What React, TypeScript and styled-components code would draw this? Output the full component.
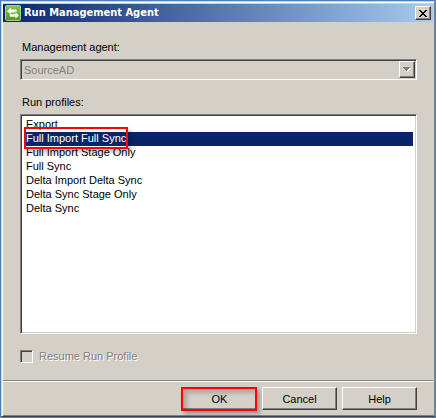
import React, { useState } from "react";
import styled, { createGlobalStyle, css } from "styled-components";

const face = "#d4d0c8";
const shade = "#808080";
const dark = "#404040";
const red = "#ff0000";

const GlobalStyle = createGlobalStyle`
  *, *::before, *::after { box-sizing: border-box; }
  body {
    margin: 0;
    background: #4f81bd;
    font-family: "Liberation Sans", Arial, sans-serif;
    font-size: 11px;
    line-height: 14px;
    color: #000;
  }
  button, select, input { font: inherit; color: inherit; margin: 0; }
`;

const raised = css`
  border: 1px solid;
  border-color: #fff ${dark} ${dark} #fff;
  box-shadow: inset -1px -1px 0 ${shade};
  background: ${face};
`;

const sunken = css`
  border: 1px solid;
  border-color: ${shade} #fff #fff ${shade};
  box-shadow: inset 1px 1px 0 ${dark}, inset -1px -1px 0 ${face};
`;

const Frame = styled.div`
  min-height: 100vh;
  padding: 1px;
  display: flex;
`;

const Dialog = styled.main`
  flex: 1;
  display: flex;
  flex-direction: column;
  padding: 1px 0 0;
  border: 1px solid;
  border-color: ${face} ${shade} ${dark} ${face};
  box-shadow: inset 1px 1px 0 #fff, inset 0 -1px 0 ${shade};
  background: ${face};
`;

const TitleBar = styled.header`
  display: flex;
  align-items: center;
  height: 18px;
  margin: 1px 1px 0;
  padding: 0 2px;
  gap: 3px;
  background: linear-gradient(90deg, #0a246a, #a6caf0);
`;

const Title = styled.h1`
  flex: 1;
  margin: 0;
  color: #fff;
  font: bold 11px/16px "DejaVu Sans Condensed", Tahoma, sans-serif;
`;

const CloseButton = styled.button`
  ${raised}
  display: flex;
  align-items: center;
  justify-content: center;
  width: 16px;
  height: 14px;
  padding: 0;
`;

const Body = styled.section`
  flex: 1;
  display: flex;
  flex-direction: column;
  padding: 18px 17px 17px 18px;
`;

const Label = styled.label`
  padding-left: 2px;
`;

const DropDown = styled.div`
  ${sunken}
  display: flex;
  align-items: stretch;
  height: 21px;
  margin: 5px 0 15px;
  padding: 1px;
`;

const AgentSelect = styled.select`
  flex: 1;
  appearance: none;
  border: 0;
  padding: 0 2px;
  background: transparent;
  &:disabled { color: ${shade}; opacity: 1; }
`;

const Arrow = styled.span`
  ${raised}
  display: flex;
  align-items: center;
  justify-content: center;
  width: 16px;
  pointer-events: none;
`;

const ListArea = styled.div`
  position: relative;
  flex: 1;
  display: flex;
  margin: 5px 0 15px;
`;

const ProfileList = styled.select`
  ${sunken}
  flex: 1;
  min-height: 110px;
  padding: 3px;
  border-radius: 0;
  background: #fff;
  outline: 0;
  overflow: hidden;
`;

const Profile = styled.option`
  min-height: 14px;
  height: 14px;
  padding: 0 2px;
  line-height: 14px;
  &:checked {
    background: #0a246a linear-gradient(#0a246a, #0a246a);
    color: #fff;
    -webkit-text-fill-color: #fff;
  }
`;

const highlight = css`
  position: absolute;
  border: 2px solid ${red};
  pointer-events: none;
`;

const ProfileHighlight = styled.span`
  ${highlight}
  top: 13px;
  left: 4px;
  width: 104px;
  height: 22px;
  box-shadow: 3px 3px 4px rgba(0, 0, 0, 0.25);
`;

const CheckRow = styled.label`
  display: flex;
  align-items: center;
  gap: 6px;
  color: ${shade};
  text-shadow: 1px 1px 0 #fff;
`;

const CheckBox = styled.input`
  ${sunken}
  appearance: none;
  width: 13px;
  height: 13px;
`;

const Footer = styled.footer`
  display: flex;
  justify-content: flex-end;
  gap: 5px;
  margin: 0 1px;
  padding: 6px 16px 6px;
  border-top: 1px solid ${shade};
  box-shadow: inset 0 1px 0 #fff;
`;

const Action = styled.button`
  ${raised}
  position: relative;
  width: 75px;
  height: 23px;
  padding: 0;
`;

const ActionHighlight = styled.span`
  ${highlight}
  inset: -1px -1px -2px -2px;
  box-shadow: 3px 3px 4px rgba(0, 0, 0, 0.25), inset 4px 4px 4px rgba(0, 0, 0, 0.2);
`;

const profiles = [
  "Export",
  "Full Import Full Sync",
  "Full Import Stage Only",
  "Full Sync",
  "Delta Import Delta Sync",
  "Delta Sync Stage Only",
  "Delta Sync",
];

function AgentIcon() {
  return (
    <svg width="16" height="16" viewBox="0 0 16 16" aria-hidden="true">
      <defs>
        <linearGradient id="green" x1="0" y1="0" x2="0" y2="1">
          <stop offset="0" stopColor="#8cc653" />
          <stop offset="1" stopColor="#4c9a20" />
        </linearGradient>
      </defs>
      <rect x="0.5" y="0.5" width="15" height="15" rx="1" fill="url(#green)" stroke="#a9d487" />
      <path d="M2 6.2 6 2.5V4.5H11.5V7.5H6V9.8Z" fill="#fff" />
      <path d="M14.2 10.4 10.2 14.2V12H4.5V8.8H10.2V6.6Z" fill="#fff" stroke="#5aa52b" strokeWidth="0.6" />
    </svg>
  );
}

export default function App() {
  const [profile, setProfile] = useState("Full Import Full Sync");
  return (
    <>
      <GlobalStyle />
      <Frame>
        <Dialog aria-labelledby="title">
          <TitleBar>
            <AgentIcon />
            <Title id="title">Run Management Agent</Title>
            <CloseButton type="button" aria-label="Close">
              <svg width="8" height="7" viewBox="0 0 8 7" shapeRendering="crispEdges" aria-hidden="true">
                <path
                  d="M0 0h2v1h1v1h2V1h1V0h2v1H7v1H6v1H5v1h1v1h1v1h1v1H6V6H5V5H3v1H2v1H0V6h1V5h1V4h1V3H2V2H1V1H0Z"
                  fill="#000"
                />
              </svg>
            </CloseButton>
          </TitleBar>
          <Body>
            <Label htmlFor="agent">Management agent:</Label>
            <DropDown>
              <AgentSelect id="agent" disabled defaultValue="SourceAD">
                <option>SourceAD</option>
              </AgentSelect>
              <Arrow aria-hidden="true">
                <svg width="8" height="5" viewBox="0 0 8 5" shapeRendering="crispEdges">
                  <path d="M1 1h7v1H7v1H6v1H5v1H4V4H3V3H2V2H1Z" fill="#fff" />
                  <path d="M0 0h7v1H6v1H5v1H4v1H3V3H2V2H1V1H0Z" fill="#808080" />
                </svg>
              </Arrow>
            </DropDown>
            <Label htmlFor="profiles">Run profiles:</Label>
            <ListArea>
              <ProfileList
                id="profiles"
                size={7}
                value={profile}
                onChange={(event) => setProfile(event.target.value)}
              >
                {profiles.map((name) => (
                  <Profile key={name} value={name}>
                    {name}
                  </Profile>
                ))}
              </ProfileList>
              <ProfileHighlight />
            </ListArea>
            <CheckRow>
              <CheckBox type="checkbox" disabled />
              Resume Run Profile
            </CheckRow>
          </Body>
          <Footer>
            <Action type="button">
              OK
              <ActionHighlight />
            </Action>
            <Action type="button">Cancel</Action>
            <Action type="button">Help</Action>
          </Footer>
        </Dialog>
      </Frame>
    </>
  );
}
